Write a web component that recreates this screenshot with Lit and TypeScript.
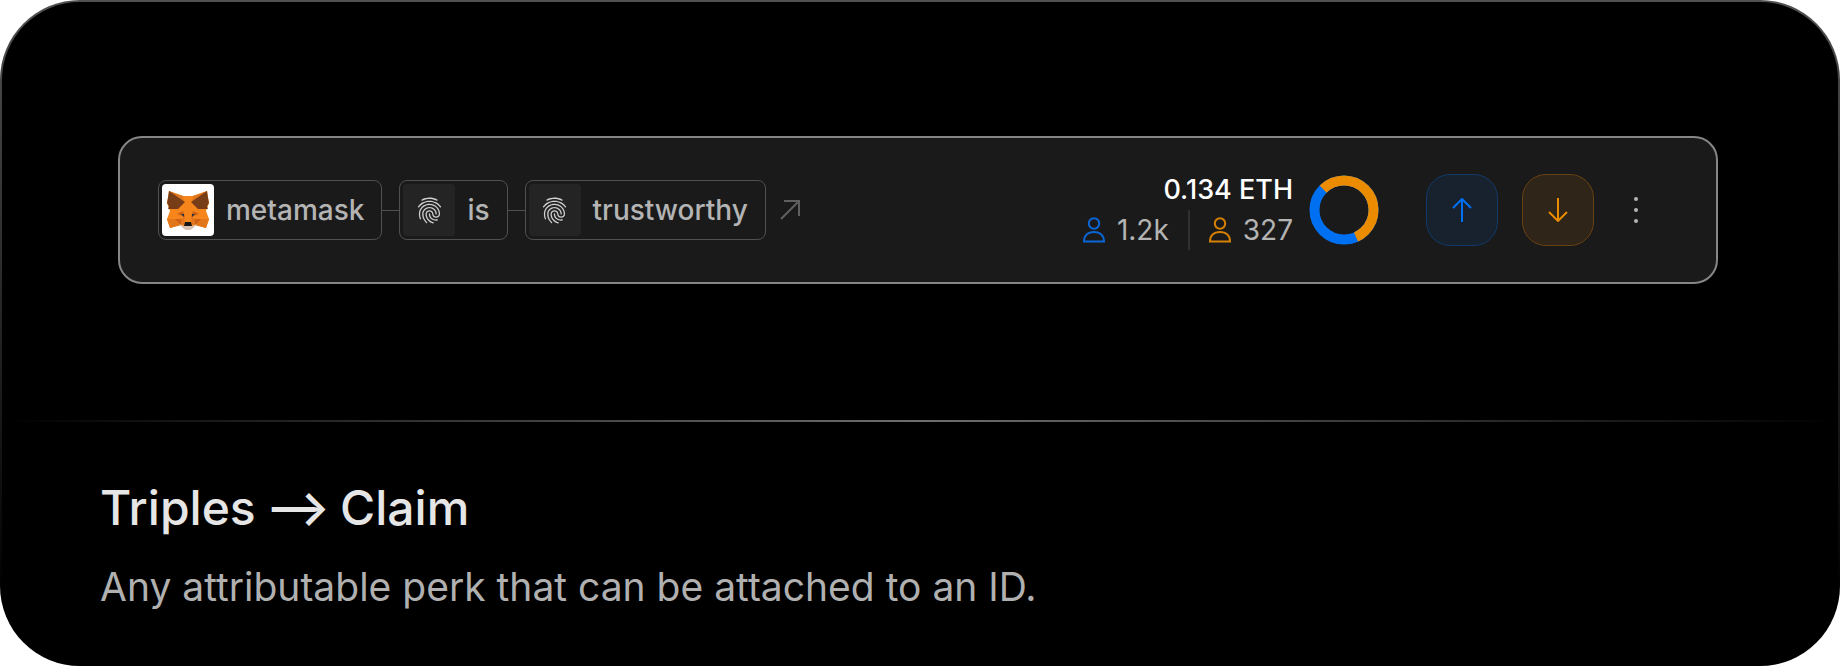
import { LitElement, html, css, svg } from "lit";
import { customElement } from "lit/decorators.js";

interface Atom {
  label: string;
  fox?: boolean;
}

const atoms: Atom[] = [
  { label: "metamask", fox: true },
  { label: "is" },
  { label: "trustworthy" },
];

const counts = [
  { value: "1.2k", tone: "blue" },
  { value: "327", tone: "amber" },
];

const foxIcon = html`<svg class="fox" viewBox="0 0 42 39" aria-hidden="true">
  <path fill="#f6851b" d="M2 0 16 5H26L40 0 42 12 39 20 42 28 39 37 28 34 24 38H18L14 34 3 37 0 28 3 20 0 12Z"/>
  <path fill="#e2761b" d="M2 0 16 5 17 12 3 6ZM40 0 26 5 25 12 39 6ZM3 28H14L14 34 3 37 0 28ZM39 28H28V34L39 37 42 28Z"/>
  <path fill="#763d16" d="M2 0 18 11 11 18 1 18 2 15 0 12 1 7ZM40 0 24 11 31 18 41 18 40 15 42 12 41 7Z"/>
  <path fill="#cd6116" d="M8 28H14L14 34ZM34 28H28V34ZM10 23 16 20 18 26ZM32 23 26 20 24 26Z"/>
  <path fill="#e4751f" d="M14 28 18 26 17 33 14 34ZM28 28 24 26 25 33 28 34Z"/>
  <path fill="#d7c1b3" d="M12 33 17 35H25L30 33 25 38 23 39H19L17 38Z"/>
  <path fill="#161616" d="M18 31H24L25 35H17Z"/>
  <path fill="#233447" d="M14 23 17 23 17 26ZM28 23 25 23 25 26Z"/>
</svg>`;

const fingerprintIcon = html`<svg class="print" viewBox="0 0 24 24" aria-hidden="true">
  <path d="M17.81 4.47c-.08 0-.16-.02-.23-.06C15.66 3.42 14 3 12.01 3c-1.98 0-3.86.47-5.57 1.41-.24.13-.54.04-.68-.2-.13-.24-.04-.55.2-.68C7.82 2.52 9.86 2 12.01 2c2.13 0 3.99.47 6.03 1.52.25.13.34.43.21.67-.09.18-.26.28-.44.28zM3.5 9.72c-.1 0-.2-.03-.29-.09-.23-.16-.28-.47-.12-.7.99-1.4 2.25-2.5 3.75-3.27C9.98 4.04 14 4.03 17.15 5.65c1.5.77 2.76 1.86 3.75 3.25.16.22.11.54-.12.7-.23.16-.54.11-.7-.12-.9-1.26-2.04-2.25-3.39-2.94-2.87-1.47-6.54-1.47-9.4.01-1.36.7-2.5 1.7-3.4 2.96-.08.14-.23.21-.39.21zm6.25 12.07c-.13 0-.26-.05-.35-.15-.87-.87-1.34-1.43-2.01-2.64-.69-1.23-1.05-2.73-1.05-4.34 0-2.97 2.54-5.39 5.66-5.39s5.66 2.42 5.66 5.39c0 .28-.22.5-.5.5s-.5-.22-.5-.5c0-2.42-2.09-4.39-4.66-4.39-2.57 0-4.66 1.97-4.66 4.39 0 1.44.32 2.77.93 3.85.64 1.15 1.08 1.64 1.85 2.42.19.2.19.51 0 .71-.11.1-.24.15-.37.15zm7.17-1.85c-1.19 0-2.24-.3-3.1-.89-1.49-1.01-2.38-2.65-2.38-4.39 0-.28.22-.5.5-.5s.5.22.5.5c0 1.41.72 2.74 1.94 3.56.71.48 1.54.71 2.54.71.24 0 .64-.03 1.04-.1.27-.05.53.13.58.41.05.27-.13.53-.41.58-.57.11-1.07.12-1.21.12zM14.91 22c-.04 0-.09-.01-.13-.02-1.59-.44-2.63-1.03-3.72-2.1-1.4-1.39-2.17-3.24-2.17-5.22 0-1.62 1.38-2.94 3.08-2.94 1.7 0 3.08 1.32 3.08 2.94 0 1.07.93 1.94 2.08 1.94s2.08-.87 2.08-1.94c0-3.77-3.25-6.83-7.25-6.83-2.84 0-5.44 1.58-6.61 4.03-.39.81-.59 1.76-.59 2.8 0 .78.07 2.01.67 3.61.1.26-.03.55-.29.64-.26.1-.55-.04-.64-.29-.49-1.31-.73-2.61-.73-3.96 0-1.2.23-2.29.68-3.24 1.33-2.79 4.28-4.6 7.51-4.6 4.55 0 8.25 3.51 8.25 7.83 0 1.62-1.38 2.94-3.08 2.94s-3.08-1.32-3.08-2.94c0-1.07-.93-1.94-2.08-1.94s-2.08.87-2.08 1.94c0 1.71.66 3.31 1.87 4.51.95.94 1.86 1.46 3.27 1.85.27.07.42.35.35.61-.05.23-.26.38-.47.38z"/>
</svg>`;

const personIcon = (tone: string) => html`<svg class="person ${tone}" viewBox="0 0 22 26" aria-hidden="true">
  <circle cx="11" cy="6.5" r="5.2"/><path d="M1 24.5C1 18.5 5 15 11 15S21 18.5 21 24.5Z"/>
</svg>`;

const icon = (shape: unknown) => html`<svg class="icon" viewBox="0 0 24 24" aria-hidden="true">${shape}</svg>`;

@customElement("app-root")
export class AppRoot extends LitElement {
  static styles = css`
    :host {
      display: block;
      font-family: Inter, sans-serif;
      color: #b4b4b4;
      background: #fff;
    }
    * { box-sizing: border-box; }
    svg { display: block; flex: none; fill: none; stroke: currentColor; stroke-width: 2; }
    .panel {
      border: 2px solid transparent;
      border-radius: 80px;
      background:
        linear-gradient(#000, #000) padding-box,
        linear-gradient(#505050, #000 90%) border-box;
    }
    .stage { padding: 134px 120px 136px 116px; }
    .claim {
      display: flex;
      align-items: center;
      justify-content: space-between;
      gap: 32px;
      padding: 32px 62px 32px 38px;
      border: 2px solid #868686;
      border-radius: 24px;
      background: #1a1a1a;
      font-size: 28px;
      line-height: 40px;
    }
    .triple, .stats, .actions, .counts, .count { display: flex; align-items: center; }
    .chip {
      display: flex;
      align-items: center;
      gap: 12px;
      height: 60px;
      padding: 3px 17px 3px 3px;
      border: 1px solid #505050;
      border-radius: 8px;
      font-weight: 500;
    }
    .avatar {
      display: grid;
      place-items: center;
      width: 52px;
      height: 52px;
      border-radius: 4px;
      background: #242424;
    }
    .avatar.light { background: #fff; }
    .fox { width: 42px; height: 39px; stroke: none; }
    .print { width: 31px; height: 31px; stroke: none; fill: #cfcfcf; }
    .link { width: 17px; height: 1px; background: #505050; }
    .open { margin-left: 12px; color: #606060; }
    .figures { display: grid; justify-items: end; }
    .total { font-size: 27px; font-weight: 500; color: #fff; }
    .count { gap: 12px; }
    .count + .count { margin-left: 19px; padding-left: 19px; border-left: 2px solid #303030; }
    .person { width: 22px; height: 26px; }
    .blue { color: #0a66d6; }
    .amber { color: #d68000; }
    .ring { width: 70px; height: 70px; margin-left: 16px; stroke-width: 10; }
    .against { stroke: #ea8b00; }
    .for { stroke: #0070f3; }
    .actions { gap: 24px; margin-left: 47px; }
    button {
      display: grid;
      place-items: center;
      padding: 0;
      border: 0;
      background: none;
      color: #b4b4b4;
      cursor: pointer;
    }
    .vote { width: 72px; height: 72px; border-radius: 24px; }
    .vote.up { color: #0070f3; background: #18222f; border: 1px solid #113a69; }
    .vote.down { color: #ea8b00; background: #2f2518; border: 1px solid #684113; }
    .icon { width: 24px; height: 24px; }
    .more { width: 36px; height: 36px; }
    .dots { width: 28px; height: 28px; fill: currentColor; stroke: none; }
    .rule { height: 2px; background: linear-gradient(90deg, transparent, #6e6e6e, transparent); }
    .copy { padding: 56px 98px 52px; }
    h2, p { margin: 0; }
    h2 {
      display: flex;
      align-items: center;
      gap: 10px;
      font-size: 48px;
      font-weight: 500;
      line-height: 60px;
      color: #e6e6e6;
    }
    .to { font-weight: 600; }
    p { margin-top: 24px; font-size: 39px; line-height: 50px; color: #b0b0b0; }
  `;

  private chip(atom: Atom, index: number) {
    return html`${index ? html`<span class="link"></span>` : ""}
      <span class="chip">
        <span class="avatar ${atom.fox ? "light" : ""}">${atom.fox ? foxIcon : fingerprintIcon}</span>
        <span>${atom.label}</span>
      </span>`;
  }

  render() {
    return html`<main class="panel">
      <section class="stage">
        <article class="claim">
          <div class="triple">
            ${atoms.map((a, i) => this.chip(a, i))}
            <a class="open" href="#claim" aria-label="Open claim">${icon(svg`<path d="M3 21 21 3M6 3H21V18"/>`)}</a>
          </div>
          <div class="stats">
            <div class="figures">
              <span class="total">0.134 ETH</span>
              <div class="counts">
                ${counts.map((c) => html`<span class="count">${personIcon(c.tone)}<span>${c.value}</span></span>`)}
              </div>
            </div>
            <svg class="ring" viewBox="0 0 70 70" aria-hidden="true">
              <circle class="for" cx="35" cy="35" r="29.5"/>
              <circle class="against" cx="35" cy="35" r="29.5" pathLength="360" stroke-dasharray="201 159" transform="rotate(-135 35 35)"/>
            </svg>
            <div class="actions">
              <button class="vote up" aria-label="Support">${icon(svg`<path d="M12 24V1M3 10 12 1 21 10"/>`)}</button>
              <button class="vote down" aria-label="Oppose">${icon(svg`<path d="M12 0V23M3 14 12 23 21 14"/>`)}</button>
              <button class="more" aria-label="More options">
                <svg class="dots" viewBox="0 0 28 28" aria-hidden="true">
                  <circle cx="14" cy="3" r="2"/><circle cx="14" cy="14" r="2"/><circle cx="14" cy="25" r="2"/>
                </svg>
              </button>
            </div>
          </div>
        </article>
      </section>
      <div class="rule"></div>
      <section class="copy">
        <h2><span>Triples</span><span class="to">⟶</span><span>Claim</span></h2>
        <p>Any attributable perk that can be attached to an ID.</p>
      </section>
    </main>`;
  }
}
